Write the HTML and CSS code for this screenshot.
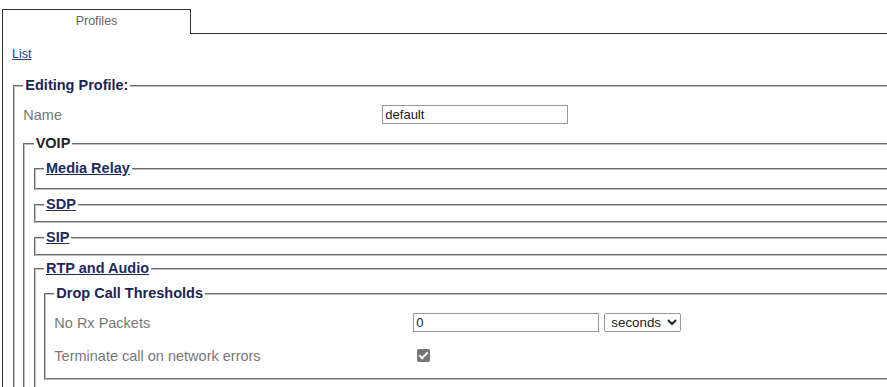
FILE: index.html
```html
<!DOCTYPE html>
<html lang="en">
  <head>
    <meta charset="utf-8">
    <title>Profiles</title>
    <link rel="stylesheet" href="styles.css">
  </head>

  <body>
    <div class="tabs">
      <div class="tab">Profiles</div>
      <div class="tab-fill"></div>
    </div>

    <div class="panel">
      <p class="nav"><a href="#">List</a></p>

      <fieldset class="group">
        <legend>Editing Profile:</legend>
        <div class="row">
          <label for="name">Name</label>
          <input id="name" type="text" class="field" value="default">
        </div>

        <fieldset class="group">
          <legend class="plain">VOIP</legend>

          <fieldset class="group collapsed relay">
            <legend><a href="#">Media Relay</a></legend>
          </fieldset>
          <fieldset class="group collapsed">
            <legend><a href="#">SDP</a></legend>
          </fieldset>
          <fieldset class="group collapsed">
            <legend><a href="#">SIP</a></legend>
          </fieldset>

          <fieldset class="group rtp">
            <legend><a href="#">RTP and Audio</a></legend>

            <fieldset class="group">
              <legend>Drop Call Thresholds</legend>
              <div class="row">
                <label for="norx">No Rx Packets</label>
                <input id="norx" type="text" class="field" value="0">
                <select class="unit">
                  <option>seconds</option>
                  <option>minutes</option>
                </select>
              </div>
              <div class="row">
                <label for="term">Terminate call on network errors</label>
                <input id="term" type="checkbox" class="check" checked disabled>
              </div>
            </fieldset>
          </fieldset>
        </fieldset>
      </fieldset>
    </div>
  </body>
</html>
```

FILE: styles.css
```css
html,
body {
  overflow: hidden;
}

body {
  margin: 9px 0 0 2px;
  font-family: "Liberation Sans", Arial, sans-serif;
  font-size: 14.5px;
  color: #777;
  background-color: #fff;
}

a {
  color: #1e2b5c;
}

.tabs {
  display: flex;
  inline-size: 1400px;
}

.tab {
  inline-size: 187px;
  block-size: 24px;
  border: 1px solid #333;
  border-block-end: 0;
  text-align: center;
  line-height: 22px;
  font-size: 12.5px;
  color: #666;
}

.tab-fill {
  flex: 1;
  block-size: 24px;
  border-block-end: 1px solid #333;
}

.panel {
  inline-size: 1390px;
  border-inline-start: 1px solid #333;
  padding: 0 0 40px 9px;
}

.nav {
  margin: 0;
  padding-block-start: 13px;
  line-height: 15px;
  font-size: 12.5px;

  a {
    color: #22407a;
  }
}

.group {
  margin: 4px 0 0;
  border: 2px groove #c0c0c0;
  padding: 4px 0 6px 8.33px;
  min-inline-size: 0;

  legend {
    padding-inline: 2px;
    line-height: 17px;
    font-weight: bold;
    color: #1c2452;
  }

  .plain {
    color: #222;
  }
}

.panel > .group {
  margin-block-start: 15px;
  margin-inline-start: 1px;
}

.collapsed {
  margin-block-start: 6px;
  padding-block-end: 4px;
}

.relay {
  margin-block-start: 4px;
  padding-block-end: 7px;
}

.rtp {
  margin-block-start: 4px;
  padding-block-end: 60px;
}

.row {
  display: flex;
  align-items: center;
  block-size: 33px;

  label {
    flex: none;
    inline-size: 359px;
  }
}

.field {
  box-sizing: border-box;
  inline-size: 186px;
  block-size: 19px;
  margin: 0;
  border: 1px solid #999;
  border-radius: 0;
  padding: 0 2px;
  font-family: inherit;
  font-size: 13px;
  color: #222;
}

.unit {
  box-sizing: border-box;
  inline-size: 77px;
  block-size: 19px;
  margin: 0 0 0 5px;
  border: 1px solid #999;
  border-radius: 2px;
  padding: 0 2px;
  font-family: inherit;
  font-size: 13.33px;
  color: #222;
  background-color: #fff;
}

.check {
  appearance: none;
  position: relative;
  margin: 0 0 0 4px;
  inline-size: 13px;
  block-size: 13px;
  border-radius: 2px;
  background-color: #767676;

  &:checked::after {
    content: "";
    position: absolute;
    left: 4px;
    top: 1px;
    inline-size: 3px;
    block-size: 7px;
    border: solid #fff;
    border-width: 0 2px 2px 0;
    transform: rotate(45deg);
  }
}
```
